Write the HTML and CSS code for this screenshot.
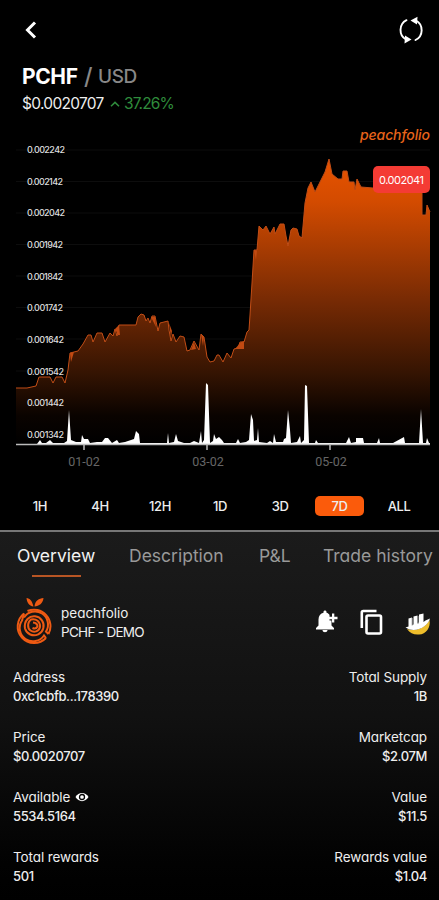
FILE: index.html
```
<!DOCTYPE html>
<html lang="en">
<head>
    <meta charset="UTF-8">
    <title>PCHF / USD</title>
    <link rel="stylesheet" href="styles.css">
</head>
<body>
    <div class="app">
        <header class="topbar">
            <svg class="icon-back" width="14" height="20" viewBox="0 0 14 20">
                <path d="M11 2.5 3.5 10 11 17.5" fill="none" stroke="#fff" stroke-width="3"/>
            </svg>
            <svg class="icon-refresh" width="26" height="28" viewBox="0 0 26 28">
                <g fill="none" stroke="#fff" stroke-width="1.9" stroke-linecap="round">
                    <path d="M8.500 4.200A11 11 0 0 0 8 23.5"/>
                    <path d="M17.5 24A11 11 0 0 0 18 4.500"/>
                </g>
                <path d="M12.500 4.500 19.500 .8 19 8.500Z M13.500 23.500 7 19.500 6.500 27.600Z" fill="#fff"/>
            </svg>
        </header>

        <section class="heading">
            <h1 class="pair"><span class="pair-base">PCHF</span><span class="pair-slash">/</span><span class="pair-quote">USD</span></h1>
            <div class="quote">
                <span class="quote-price">$0.0020707</span>
                <svg width="10" height="6" viewBox="0 0 10 6"><path d="M1 5.2 5 1.4 9 5.2" fill="none" stroke="#2f8c3c" stroke-width="1.5"/></svg>
                <span class="quote-change">37.26%</span>
            </div>
        </section>

        <svg class="chart" width="439" height="360" viewBox="0 120 439 360">
            <defs>
                <linearGradient id="area" gradientUnits="userSpaceOnUse" x1="0" y1="159" x2="0" y2="444">
                    <stop offset="0" stop-color="#e85300"/>
                    <stop offset="0.15" stop-color="#d34b00"/>
                    <stop offset="0.5" stop-color="#762a04"/>
                    <stop offset="0.75" stop-color="#351402"/>
                    <stop offset="0.9" stop-color="#0a0300"/>
                    <stop offset="1" stop-color="#000"/>
                </linearGradient>
            </defs>

            <path class="grid" d="M16 150H430M16 181.500H430M16 213H430M16 244.500H430M16 276H430M16 307.500H430M16 339H430M16 371H430M16 402.500H430M16 434H430"/>

            <path fill="url(#area)" d="M16 388 27 388 36 386 39 377 50 377 53 383 56 377 62 377 65 383 68 370 70 353 78 351 83 344 88 335 91 335 93 342 97 333 102 333 105 342 110 333 113 336 115 329 117 336 119 325 136 325 138 317 141 314 144 315 146 321 148 318 150 323 152 316 155 316 158 331 160 323 168 321 169 330 171 341 173 334 176 342 180 336 184 337 187 351 190 350 194 341 199 350 201 334 204 337 207 357 210 362 214 361 217 355 219 355 223 362 227 353 231 358 234 349 238 348 240 342 244 342 247 332 249 330 250 315 252 283 254 250 257 250 259 226 263 230 266 226 270 234 274 227 275 234 280 224 284 224 286 236 288 246 291 230 293 228 297 229 299 236 302 238 305 203 308 188 311 182 315 192 320 182 325 172 329 159 332 174 338 179 342 179 343 171 347 171 349 182 354 182 355 190 357 179 361 187 373 188 422 190 422 215 426 215 427 205 430 212V444H16Z"/>
            <path class="price-line" d="M16 388 27 388 36 386 39 377 50 377 53 383 56 377 62 377 65 383 68 370 70 353 78 351 83 344 88 335 91 335 93 342 97 333 102 333 105 342 110 333 113 336 115 329 117 336 119 325 136 325 138 317 141 314 144 315 146 321 148 318 150 323 152 316 155 316 158 331 160 323 168 321 169 330 171 341 173 334 176 342 180 336 184 337 187 351 190 350 194 341 199 350 201 334 204 337 207 357 210 362 214 361 217 355 219 355 223 362 227 353 231 358 234 349 238 348 240 342 244 342 247 332 249 330 250 315 252 283 254 250 257 250 259 226 263 230 266 226 270 234 274 227 275 234 280 224 284 224 286 236 288 246 291 230 293 228 297 229 299 236 302 238 305 203 308 188 311 182 315 192 320 182 325 172 329 159 332 174 338 179 342 179 343 171 347 171 349 182 354 182 355 190 357 179 361 187 373 188 422 190 422 215 426 215 427 205 430 212"/>
            <path class="accent" d="M70 353 74 352 71 362ZM115 329 119 325 120 335 118 335ZM151 317 155 317 156 327ZM169 323 171 338 172 331ZM191 350 194 342 196 349ZM201 334 203 346 204 337ZM235 349 241 342 244 341 244 349ZM254 250 257 251 256 260Z"/>

            <!-- volume -->
            <path class="volume" d="M16 444 37 444 40 440 42 443 46 443 50 440 53 443 64 443 67 441 69 410 71 440 76 442 81 442 82 435 84 439 88 439 90 443 97 442 102 442 105 438 108 438 112 443 117 440 119 443 125 442 134 439 136 431 139 434 140 443 158 443 167 443 168 433 169 443 174 442 176 434 178 441 184 443 190 443 194 441 199 443 201 431 202 443 204 440 206 383 208 385 210 443 213 441 214 434 216 439 219 437 222 440 224 443 236 443 238 439 240 443 246 442 249 440 251 414 253 420 254 441 257 440 258 428 259 442 267 443 270 441 273 443 274 434 276 442 283 442 284 439 286 438 288 410 290 430 291 443 297 442 300 436 301 443 304 440 305 385 307 386 309 443 315 443 316 440 318 443 346 443 349 437 351 443 356 442 356 438 363 438 364 443 377 443 379 438 380 443 393 443 404 437 405 443 419 443 421 409 423 443 426 443 427 438 429 443 430 443V445H16Z"/>
            <path class="axis" d="M16 444.500H430M84 444V450M207 444V450M330 444V450"/>

            <g class="y-labels">
                <text x="27" y="153" textLength="38">0.002242</text>
                <text x="27" y="184.500" textLength="36">0.002142</text>
                <text x="27" y="216" textLength="38">0.002042</text>
                <text x="27" y="248" textLength="36">0.001942</text>
                <text x="27" y="279.500" textLength="36">0.001842</text>
                <text x="27" y="311" textLength="36">0.001742</text>
                <text x="27" y="343" textLength="37">0.001642</text>
                <text x="27" y="374.500" textLength="37">0.001542</text>
                <text x="27" y="406" textLength="37">0.001442</text>
                <text x="27" y="437.500" textLength="37">0.001342</text>
            </g>
            <g class="x-labels">
                <text x="84" y="465.500">01-02</text>
                <text x="208" y="465.500">03-02</text>
                <text x="331" y="465.500">05-02</text>
            </g>

            <text class="watermark" x="360" y="139.500" textLength="70">peachfolio</text>
            <rect x="373" y="166" width="57" height="27" rx="5" fill="#f43b34"/>
            <text class="last-price" x="379" y="183.500" textLength="45">0.002041</text>
        </svg>

        <nav class="ranges">
            <span class="range">1H</span>
            <span class="range">4H</span>
            <span class="range">12H</span>
            <span class="range">1D</span>
            <span class="range">3D</span>
            <span class="range active">7D</span>
            <span class="range">ALL</span>
        </nav>

        <main class="panel">
            <nav class="tabs">
                <span class="tab tab-overview active">Overview</span>
                <span class="tab tab-description">Description</span>
                <span class="tab tab-pl">P&amp;L</span>
                <span class="tab tab-history">Trade history</span>
            </nav>

            <div class="token">
                <svg class="token-logo" width="36" height="48" viewBox="0 0 36 48">
                    <path d="M17.500 9.500C16 3.500 14 1.500 10.500 1 11 5.500 13 9 17.500 9.500ZM18.500 9.500C19 3.500 23 1.500 27.500 1 27 6.500 23 9 18.500 9.500Z" fill="#ee5a13"/>
                    <g fill="none" stroke="#ee5a13" stroke-width="2">
                        <path d="M11.500 14A16.500 16.500 0 0 1 32.500 37"/>
                        <path d="M8 16.500A16.500 16.500 0 1 0 30 41"/>
                        <path d="M8 20.500A13 13 0 0 1 30 34.500L32.500 37"/>
                        <path d="M8 16.500 6 23.500A13 13 0 0 0 28 38.500L30 41"/>
                        <path d="M11.500 22A9.500 9.500 0 1 1 9 31.500Q8 26 11.500 22"/>
                        <path d="M15 22.500C20 21 24.500 25 24 30 23 34.500 18 36 14.500 33.500 11 31 11.500 25 15 22.500Z"/>
                        <path d="M17 25.500Q21.500 26 21.500 29.500 20 32.500 16.500 31"/>
                    </g>
                </svg>
                <div class="token-name">
                    <div class="token-title">peachfolio</div>
                    <div class="token-sub">PCHF - DEMO</div>
                </div>
                <div class="token-actions">
                    <svg width="24" height="26" viewBox="0 0 24 26" fill="#fff">
                        <path d="M1 20.500V19L3.500 16.500V10.500C3.500 7 5.500 4.500 8.500 3.800V3C8.500 1 11.500 1 11.500 3V3.800C13 4.200 14 5 14.500 6V11.500H16.500V16.500L19 19V20.500ZM7.500 21H12.500C12.500 24 7.500 24 7.500 21Z"/>
                        <path d="M17 4.500H19.300V7.800H22.500V10.200H19.300V13.500H17V10.200H14V7.800H17Z"/>
                    </svg>
                    <svg width="24" height="26" viewBox="0 0 24 26" fill="none" stroke="#fff" stroke-width="2.600">
                        <path d="M1.800 19V3.500Q1.800 2 3.300 2H16.500"/>
                        <rect x="6.500" y="6.500" width="14.500" height="18" rx="1.500"/>
                    </svg>
                    <svg width="26" height="26" viewBox="0 0 26 26">
                        <path d="M2 20C11 23 20 19 24.500 11 26 18 21 25.500 14 25.500 9 26 5 24 2 20Z" fill="#edbd2b"/>
                        <path d="M.5 18.500 3.500 17.500V9.500L7 8.500V16L8.500 15.500V7.500L12.500 6.500V14L14 13.500V5.500L18.500 4.500V13L20.500 11.500 25 9.500C23 17.500 10 25 .5 18.500Z" fill="#fff"/>
                        <path d="M7.200 9V16.500M13 7V15" stroke="#999" stroke-width="1"/>
                    </svg>
                </div>
            </div>

            <div class="stats">
                <div class="stat">
                    <div class="label">Address</div>
                    <div class="value">0xc1cbfb...178390</div>
                </div>
                <div class="stat right">
                    <div class="label">Total Supply</div>
                    <div class="value">1B</div>
                </div>
                <div class="stat">
                    <div class="label">Price</div>
                    <div class="value">$0.0020707</div>
                </div>
                <div class="stat right">
                    <div class="label">Marketcap</div>
                    <div class="value">$2.07M</div>
                </div>
                <div class="stat">
                    <div class="label">Available
                        <svg class="eye" width="14" height="10" viewBox="0 0 14 10"><path d="M.5 5C3.500-.5 10.500-.5 13.500 5 10.500 10.500 3.500 10.500.5 5Z" fill="#fff"/><circle cx="7" cy="5" r="2.500" fill="#fff" stroke="#050505" stroke-width="1.300"/></svg>
                    </div>
                    <div class="value">5534.5164</div>
                </div>
                <div class="stat right">
                    <div class="label">Value</div>
                    <div class="value">$11.5</div>
                </div>
                <div class="stat">
                    <div class="label">Total rewards</div>
                    <div class="value">501</div>
                </div>
                <div class="stat right">
                    <div class="label">Rewards value</div>
                    <div class="value">$1.04</div>
                </div>
            </div>
        </main>
    </div>
</body>
</html>
```
FILE: styles.css
```
* {
    box-sizing: border-box;
}

body {
    margin: 0;
    background: #000;
    color: #eee;
    font-family: Inter, "Open Sans", sans-serif;
    font-feature-settings: "cv11";
}

svg {
    display: block;
    flex: none;
}

.app {
    width: 439px;
    height: 900px;
    overflow: hidden;
    display: flex;
    flex-direction: column;
}

.topbar {
    flex: none;
    height: 60px;
    padding: 0 15px 0 24px;
    display: flex;
    align-items: center;
    justify-content: space-between;
}

.heading {
    flex: none;
    height: 60px;
    padding: 4px 22px 0;
}

.pair {
    margin: 0;
    display: flex;
    align-items: center;
    height: 26px;
    line-height: 26px;
}

.pair-base {
    width: 62px;
    font-size: 21px;
    font-weight: 700;
    letter-spacing: -0.4px;
    color: #fff;
}

.pair-slash {
    width: 14px;
    font-size: 23px;
    font-weight: 500;
    color: #888;
}

.pair-quote {
    font-size: 19px;
    font-weight: 500;
    letter-spacing: -0.4px;
    color: #888;
}

.quote {
    display: flex;
    align-items: center;
    gap: 6px;
    height: 27px;
    font-size: 15.5px;
    letter-spacing: -0.7px;
}

.quote-price {
    width: 82px;
}

.quote-change {
    margin-left: -2px;
    letter-spacing: -0.9px;
    color: #2f8c3c;
}

.chart {
    font-family: Inter, sans-serif;
}

.grid {
    stroke: #0d0d0d;
    fill: none;
}

.price-line {
    fill: none;
    stroke: #c14d16;
    stroke-width: 1;
}

.accent {
    fill: #c14a12;
}

.volume {
    fill: #fff;
}

.axis {
    fill: none;
    stroke: #bbb;
    stroke-width: 1.5;
}

.y-labels {
    fill: #ddd;
    font-size: 9px;
    font-weight: 500;
}

.x-labels {
    fill: #666;
    font-family: Roboto, sans-serif;
    font-size: 12.5px;
    text-anchor: middle;
}

.watermark {
    fill: #e8641a;
    font-size: 14px;
    font-style: italic;
    font-weight: 500;
}

.last-price {
    fill: #fff;
    font-size: 11px;
}

.ranges {
    flex: none;
    height: 50px;
    padding: 1px 10px 0;
    display: flex;
    align-items: center;
    justify-content: space-between;
}

.range {
    width: 60px;
    margin: 0 5px;
    height: 20px;
    line-height: 20px;
    border-radius: 5px;
    text-align: center;
    font-size: 13px;
    font-weight: 500;
    letter-spacing: -0.4px;
}

.range.active {
    width: 49px;
    flex: none;
    background: #fb5b0b;
}

.panel {
    flex: none;
    height: 370px;
    border-top: 2px solid #777;
    background: linear-gradient(#1b1b1b, #111 50%, #020202 90%, #000);
}

.tabs {
    height: 48px;
    padding: 11px 0 0 17px;
    display: flex;
    white-space: nowrap;
    font-size: 17.5px;
    line-height: 26px;
    color: #999;
}

.tab-overview {
    width: 112px;
}

.tab-description {
    width: 130px;
}

.tab-pl {
    width: 64px;
}

.tab.active {
    color: #f2f2f2;
}

.tab.active::after {
    content: "";
    display: block;
    width: 49px;
    height: 2px;
    margin: 6px 0 0 15px;
    background: #b85524;
}

.token {
    height: 84px;
    padding: 17px 8px 0 16px;
    display: flex;
}

.token-name {
    margin: 7px 0 0 9px;
    font-size: 13.5px;
    line-height: 19px;
}

.token-sub {
    letter-spacing: -0.7px;
}

.token-actions {
    margin: 12px 0 0 auto;
    display: flex;
    gap: 21px;
}

.stats {
    padding: 4px 12px 0 13px;
    display: grid;
    grid-template-columns: 1fr 1fr;
    grid-auto-rows: 60px;
    font-size: 13px;
    line-height: 19px;
}

.stat.right {
    text-align: right;
}

.label {
    font-size: 13.5px;
    letter-spacing: -0.1px;
}

.value {
    font-weight: 500;
    letter-spacing: -0.4px;
}

.eye {
    display: inline-block;
    margin-left: 1px;
}
```
